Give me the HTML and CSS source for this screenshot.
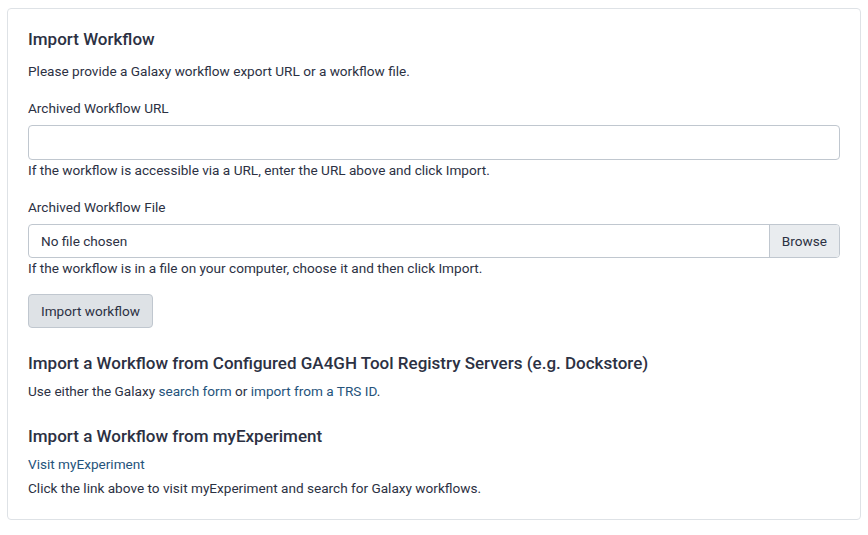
FILE: index.html
```html
<!DOCTYPE html>
<html>
<head>
<meta charset="utf-8">
<link rel="stylesheet" href="styles.css">
</head>
<body>
<div class="card">
  <h4 class="title first">Import Workflow</h4>
  <p class="intro">Please provide a Galaxy workflow export URL or a workflow file.</p>
  <div class="group">
    <label class="label">Archived Workflow URL</label>
    <div class="input"></div>
    <div class="help">If the workflow is accessible via a URL, enter the URL above and click Import.</div>
  </div>
  <div class="group">
    <label class="label">Archived Workflow File</label>
    <div class="file">
      <span class="file-name">No file chosen</span>
      <span class="browse">Browse</span>
    </div>
    <div class="help">If the workflow is in a file on your computer, choose it and then click Import.</div>
  </div>
  <button class="btn">Import workflow</button>
  <h4 class="title">Import a Workflow from Configured GA4GH Tool Registry Servers (e.g. Dockstore)</h4>
  <p class="text">Use either the Galaxy <a href="#">search form</a> or <a href="#">import from a TRS ID</a>.</p>
  <h4 class="title">Import a Workflow from myExperiment</h4>
  <a class="block-link" href="#">Visit myExperiment</a>
  <p class="text last">Click the link above to visit myExperiment and search for Galaxy workflows.</p>
</div>
</body>
</html>
```
FILE: styles.css
```css
* { box-sizing: border-box; }
body {
  margin: 8px 7px;
  font-family: Roboto, "Noto Sans", sans-serif;
  font-size: 13.6px;
  line-height: 1.5;
  color: #2c3143;
  background: #fff;
}
.card {
  border: 1px solid #dee2e6;
  border-radius: 4px;
  padding: 20px 20px 21px;
}
.title {
  font-size: 17px;
  font-weight: 500;
  line-height: 1.2;
  margin: 25px 0 7px;
}
.title.first { margin-top: 0; margin-bottom: 12px; }
.intro { margin: 0 0 16px; }
.group { margin-bottom: 16px; }
.label { display: block; margin-bottom: 7px; }
.input {
  height: 35px;
  border: 1px solid #c0c7cf;
  border-radius: 4px;
  background: #fff;
}
.file {
  display: flex;
  height: 34px;
  border: 1px solid #c0c7cf;
  border-radius: 4px;
  overflow: hidden;
}
.file-name {
  flex: 1;
  padding: 0 12px;
  line-height: 32px;
}
.browse {
  background: #e9ecef;
  border-left: 1px solid #c0c7cf;
  padding: 0 12px;
  line-height: 32px;
}
.help { margin-top: 0; }
.btn {
  display: block;
  font: inherit;
  color: inherit;
  height: 34px;
  padding: 0 12px;
  background: #dee2e6;
  border: 1px solid #c0c7cf;
  border-radius: 4px;
  margin: 0;
}
a { color: #25537b; text-decoration: none; }
.text { margin: 0; }
.block-link { display: block; margin-bottom: 4px; }
```
